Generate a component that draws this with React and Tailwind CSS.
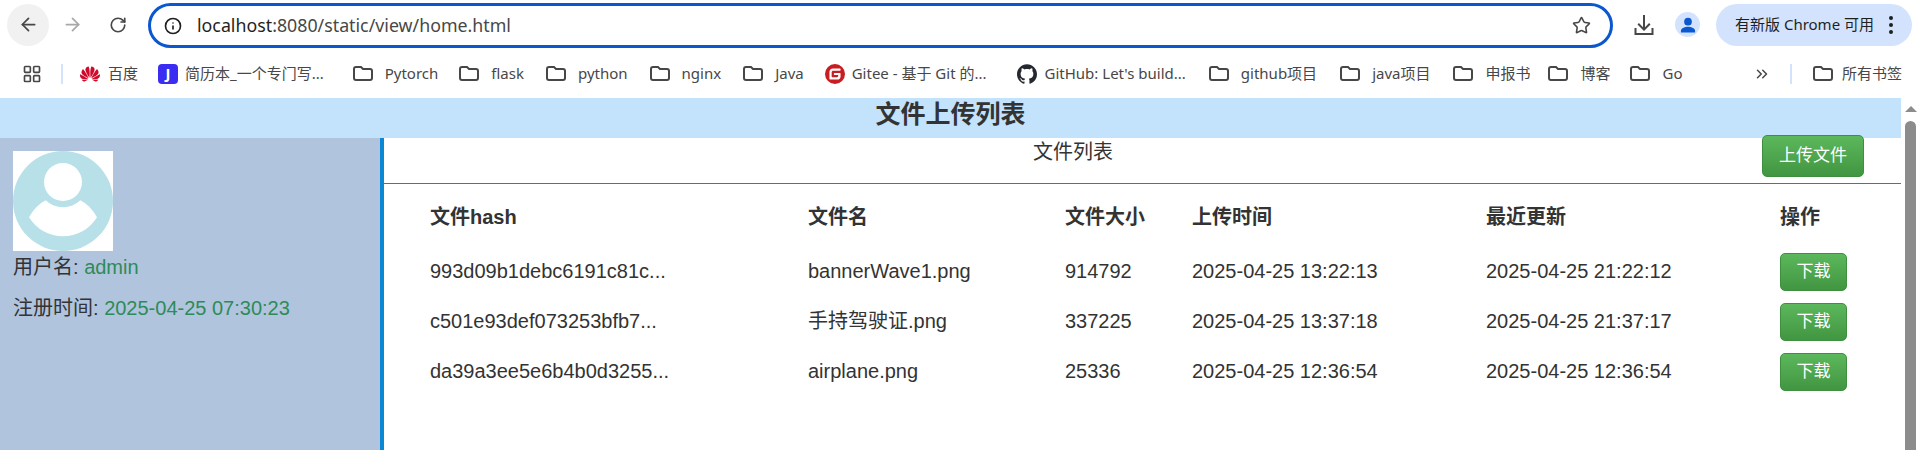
import React from 'react';
import { ArrowLeft, ArrowRight, RotateCw, Info, Star, LayoutGrid, ChevronsRight } from 'lucide-react';
import { SiHuawei, SiGitee, SiGithub } from 'react-icons/si';

const sans = "font-['Liberation_Sans','Noto_Sans_CJK_SC',sans-serif]";
const chrome = "font-['Noto_Sans','Noto_Sans_CJK_SC',sans-serif]";

const files = [
  { hash: '993d09b1debc6191c81c...', name: 'bannerWave1.png', size: '914792', created: '2025-04-25 13:22:13', updated: '2025-04-25 21:22:12' },
  { hash: 'c501e93def073253bfb7...', name: '手持驾驶证.png', size: '337225', created: '2025-04-25 13:37:18', updated: '2025-04-25 21:37:17' },
  { hash: 'da39a3ee5e6b4b0d3255...', name: 'airplane.png', size: '25336', created: '2025-04-25 12:36:54', updated: '2025-04-25 12:36:54' },
];

const FolderIcon = () => (
  <svg viewBox="0 0 20 15" className="w-[20px] h-[15px] text-[#474747]" fill="none" stroke="currentColor" strokeWidth="2">
    <path d="M3 1h5l2 2h7a2 2 0 0 1 2 2v7a2 2 0 0 1-2 2H3a2 2 0 0 1-2-2V3a2 2 0 0 1 2-2z" />
  </svg>
);

const FolderMark = ({ label, className = '' }) => (
  <div className={`flex items-center gap-[12px] ${className}`}>
    <FolderIcon />
    <span className="whitespace-nowrap">{label}</span>
  </div>
);

const GreenButton = ({ children, className = '' }) => (
  <button className={`rounded-[5px] border border-[#3e8f3e] bg-gradient-to-b from-[#5cb85c] to-[#419641] text-white text-[17px] ${className}`}>
    {children}
  </button>
);

const Toolbar = () => (
  <div className="h-[49px] flex items-center bg-white shrink-0">
    <div className="ml-[7px] w-[42px] h-[42px] rounded-full bg-[#f1f1f1] flex items-center justify-center">
      <ArrowLeft className="w-[21px] h-[21px] text-[#474747]" strokeWidth={2} />
    </div>
    <ArrowRight className="ml-[13px] w-[21px] h-[21px] text-[#a8a8a8]" strokeWidth={2} />
    <RotateCw className="ml-[26px] w-[18px] h-[18px] text-[#474747]" strokeWidth={2.2} />
    <div className="ml-[21px] w-[1465px] h-[45px] mt-[2px] rounded-full border-[3px] border-[#0b57d0] flex items-center pl-[13px] pr-[19px]">
      <Info className="w-[18px] h-[18px] text-[#1f1f1f]" strokeWidth={2.2} />
      <div className={`ml-[15px] text-[17.8px] text-[#1f1f1f] ${chrome}`}>
        localhost<span className="text-[#474747]">:8080/static/view/home.html</span>
      </div>
      <Star className="ml-auto w-[19px] h-[19px] text-[#474747]" strokeWidth={2} />
    </div>
    <svg viewBox="0 0 24 24" className="ml-[19px] w-[24px] h-[24px] text-[#474747]" fill="currentColor">
      <path d="M11 2h2v12.2l4.1-4.1 1.4 1.4-6.5 6.5-6.5-6.5 1.4-1.4 4.1 4.1z" />
      <path d="M2.5 15h2v5h15v-5h2v7h-19z" />
    </svg>
    <div className="ml-[19px] w-[25px] h-[25px] rounded-full bg-[#d3e3fd] flex items-center justify-center">
      <svg viewBox="0 0 24 24" className="w-[20px] h-[20px] text-[#0b57d0]" fill="currentColor">
        <circle cx="12" cy="8" r="4.6" />
        <path d="M3.5 21v-2.2c0-3 5.6-4.6 8.5-4.6s8.5 1.6 8.5 4.6V21z" />
      </svg>
    </div>
    <div className={`ml-[16px] w-[196px] h-[42px] rounded-full bg-[#d3e3fd] flex items-center pl-[19px] text-[15px] text-[#1f1f1f] ${chrome}`}>
      <span className="whitespace-nowrap">有新版 Chrome 可用</span>
      <svg viewBox="0 0 4 18" className="ml-auto mr-[19px] w-[4px] h-[18px] text-[#1f1f1f]" fill="currentColor">
        <circle cx="2" cy="2" r="2" />
        <circle cx="2" cy="9" r="2" />
        <circle cx="2" cy="16" r="2" />
      </svg>
    </div>
  </div>
);

const Bookmarks = () => (
  <div className={`h-[49px] flex items-center bg-white shrink-0 text-[15px] text-[#474747] ${chrome}`}>
    <LayoutGrid className="ml-[22px] w-[20px] h-[20px] text-[#474747]" strokeWidth={2} />
    <div className="ml-[19px] w-[2px] h-[20px] bg-[#d3e3fd]" />
    <div className="ml-[17px] flex items-center gap-[8px] w-[58px]">
      <SiHuawei className="w-[20px] h-[20px] text-[#cf0a2c] shrink-0" />
      <span className="whitespace-nowrap">百度</span>
    </div>
    <div className="ml-[20px] flex items-center gap-[7px]">
      <div className="w-[20px] h-[20px] rounded-[4px] bg-[#3a2cf0] flex items-center justify-center text-white text-[15px] font-bold">J</div>
      <span className="whitespace-nowrap">简历本_一个专门写...</span>
    </div>
    <FolderMark label="Pytorch" className="ml-[29px]" />
    <FolderMark label="flask" className="ml-[21px]" />
    <FolderMark label="python" className="ml-[22px]" />
    <FolderMark label="nginx" className="ml-[22px]" />
    <FolderMark label="Java" className="ml-[22px]" />
    <div className="ml-[21px] flex items-center gap-[7px]">
      <SiGitee className="w-[20px] h-[20px] text-[#c71d23]" />
      <span className="whitespace-nowrap">Gitee - 基于 Git 的...</span>
    </div>
    <div className="ml-[30px] flex items-center gap-[8px]">
      <SiGithub className="w-[20px] h-[20px] text-[#24292f]" />
      <span className="whitespace-nowrap">GitHub: Let's build...</span>
    </div>
    <FolderMark label="github项目" className="ml-[23px]" />
    <FolderMark label="java项目" className="ml-[23px]" />
    <FolderMark label="申报书" className="ml-[23px]" />
    <FolderMark label="博客" className="ml-[18px]" />
    <FolderMark label="Go" className="ml-[20px]" />
    <ChevronsRight className="ml-auto w-[18px] h-[18px] text-[#474747]" strokeWidth={2} />
    <div className="ml-[19px] w-[2px] h-[20px] bg-[#d3e3fd]" />
    <div className="ml-[21px] mr-[18px] flex items-center gap-[9px]">
      <FolderIcon />
      <span className="whitespace-nowrap">所有书签</span>
    </div>
  </div>
);

const Avatar = () => (
  <svg viewBox="0 0 100 100" className="w-[100px] h-[100px] block">
    <rect width="100" height="100" fill="#fff" />
    <circle cx="50" cy="50" r="50" fill="#b7e0e8" />
    <circle cx="50" cy="31" r="19" fill="#fff" />
    <path d="M32.7 49.3A25 25 0 0 0 67.3 49.3Q77 54 84 66.3A40 40 0 0 1 16 66.3Q23 54 32.7 49.3Z" fill="#fff" />
  </svg>
);

const Sidebar = () => (
  <aside className="w-[384px] shrink-0 bg-[#b0c4de] border-r-4 border-[#0b87d6] pt-[13px] pl-[13px] text-[20px] text-[#333]">
    <Avatar />
    <p className="leading-[32px]">用户名: <span className="text-[#2e8b57]">admin</span></p>
    <p className="mt-[9px] leading-[32px]">注册时间: <span className="text-[#2e8b57]">2025-04-25 07:30:23</span></p>
  </aside>
);

const FileTable = () => (
  <div className="mt-[8px] pl-[46px] grid grid-cols-[378px_257px_127px_294px_294px_1fr] grid-rows-[55px_50px_50px_50px] items-center text-[20px] text-[#333]">
    {['文件hash', '文件名', '文件大小', '上传时间', '最近更新', '操作'].map((h) => (
      <div key={h} className="font-bold pb-[5px]">{h}</div>
    ))}
    {files.map((f) => (
      <React.Fragment key={f.hash}>
        <div className="pb-[2px]">{f.hash}</div>
        <div className="pb-[2px]">{f.name}</div>
        <div className="pb-[2px]">{f.size}</div>
        <div className="pb-[2px]">{f.created}</div>
        <div className="pb-[2px]">{f.updated}</div>
        <div className="flex"><GreenButton className="w-[67px] h-[38px]">下载</GreenButton></div>
      </React.Fragment>
    ))}
  </div>
);

export default function App() {
  return (
    <div className={`w-[1920px] h-[450px] flex flex-col overflow-hidden bg-white ${sans}`}>
      <Toolbar />
      <Bookmarks />
      <div className="flex-1 flex min-h-0">
        <div className="w-[1901px] flex flex-col">
          <h1 className="h-[40px] shrink-0 bg-[#c2e3fb] text-center text-[25px] leading-[32px] font-bold text-[#333]">文件上传列表</h1>
          <div className="flex-1 flex min-h-0">
            <Sidebar />
            <main className="flex-1">
              <div className="h-[46px] flex items-start border-b border-[#0b87d6]">
                <div className="flex-1 text-center text-[20px] leading-[28px] text-[#333]">文件列表</div>
                <GreenButton className="relative -mt-[3px] mr-[37px] w-[102px] h-[42px]">上传文件</GreenButton>
              </div>
              <FileTable />
            </main>
          </div>
        </div>
        <div className="flex-1 flex flex-col items-center bg-white pt-[8px]">
          <div className="w-0 h-0 border-x-[6px] border-x-transparent border-b-[6px] border-b-[#8c8c8c]" />
          <div className="mt-[9px] w-[11px] flex-1 rounded-t-full bg-[#8c8c8c]" />
        </div>
      </div>
    </div>
  );
}
